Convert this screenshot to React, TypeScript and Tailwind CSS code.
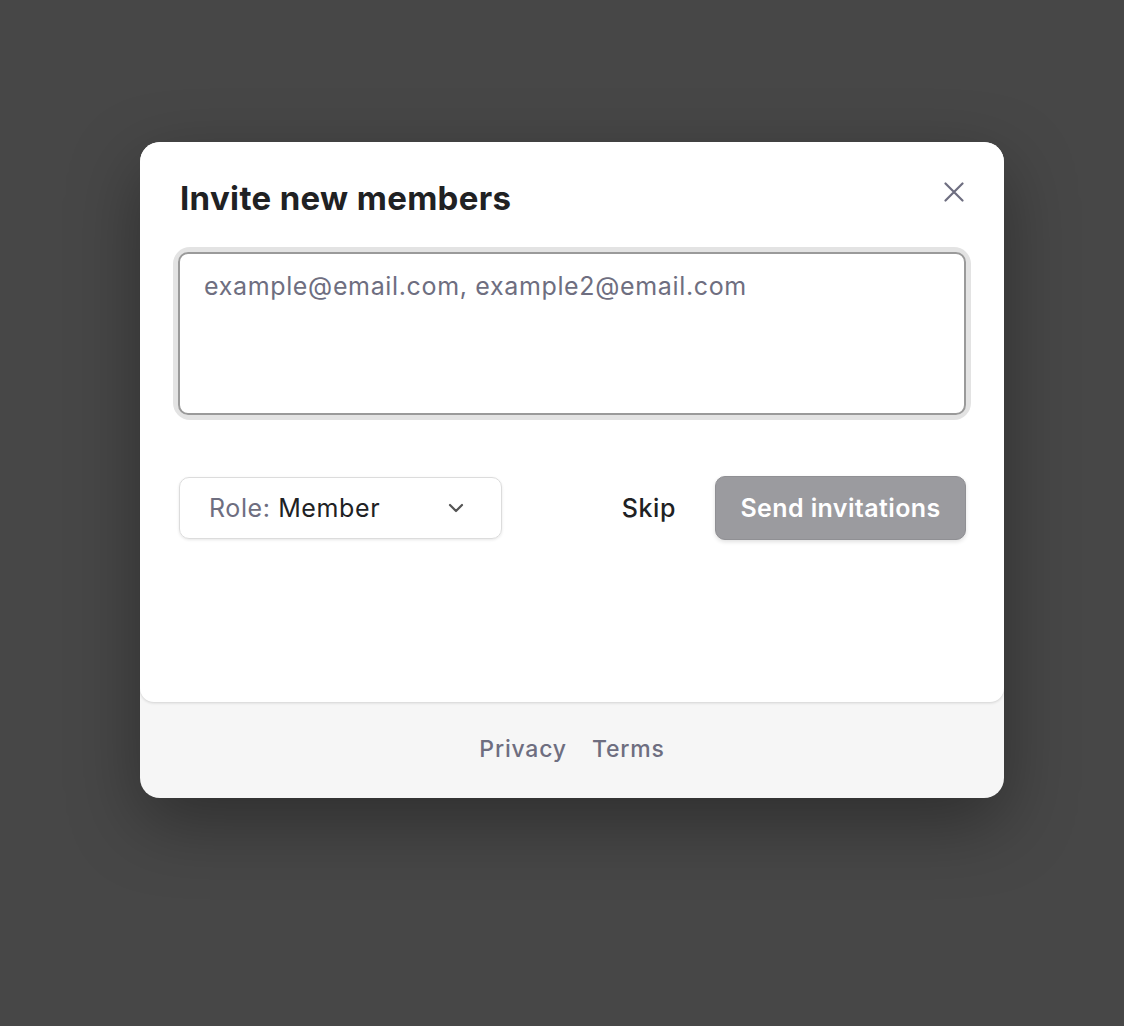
import React from "react";

export default function App() {
  return (
    <div
      className="min-h-[1026px] w-full bg-[#474747] flex justify-start pl-[140px] pt-[142px]"
      style={{ fontFamily: "Inter, 'Noto Sans', sans-serif" }}
    >
      <div className="w-[864px] h-[656px] rounded-[20px] bg-[#f6f6f6] flex flex-col overflow-hidden shadow-[0_24px_70px_rgba(0,0,0,0.35)]">
        <div className="h-[560px] bg-white rounded-b-[14px] shadow-[0_1px_3px_rgba(0,0,0,0.15)] px-[38px] pt-[38px] flex flex-col relative">
          <div className="flex items-start justify-between">
            <h1 className="pl-[2px] text-[33px] leading-[36px] font-bold text-[#202123] tracking-[0.35px]">
              Invite new members
            </h1>
            <button className="absolute right-[40px] top-[40px] w-[20px] h-[20px] flex items-center justify-center text-[#6e6e80]">
              <svg width="20" height="20" viewBox="0 0 20 20" fill="none">
                <path d="M1.5 1.5L18.5 18.5M18.5 1.5L1.5 18.5" stroke="currentColor" strokeWidth="2.2" strokeLinecap="round" />
              </svg>
            </button>
          </div>
          <div className="mt-[36px] rounded-[12px] shadow-[0_0_0_5px_#e3e3e3]">
            <div className="h-[163px] rounded-[10px] border-2 border-[#9a9a9a] px-[24px] pt-[16px] text-[25px] leading-[32px] tracking-[0.65px] text-[#6e6e80]">
              example@email.com, example2@email.com
            </div>
          </div>
          <div className="mt-[61px] flex items-center">
            <div className="w-[323px] h-[62px] rounded-[10px] border border-[#dcdcdc] shadow-[0_1px_3px_rgba(0,0,0,0.1)] flex items-center justify-between pl-[29px] pr-[37px] ml-[1px]">
              <span className="text-[25px] leading-[32px] tracking-[0.6px]">
                <span className="text-[#6e6e80]">Role: </span>
                <span className="text-[#202123]">Member</span>
              </span>
              <svg width="16" height="10" viewBox="0 0 16 10" fill="none" className="text-[#555]">
                <path d="M2 2L8 8L14 2" stroke="currentColor" strokeWidth="2.2" strokeLinecap="round" strokeLinejoin="round" />
              </svg>
            </div>
            <div className="flex-1" />
            <button className="text-[25px] leading-[32px] tracking-[0.6px] font-medium text-[#202123] mr-[39px]">Skip</button>
            <button className="w-[251px] h-[64px] rounded-[10px] bg-[#9b9b9f] border border-[#909094] shadow-[0_2px_4px_rgba(0,0,0,0.12)] text-white text-[25px] leading-[32px] tracking-[0.4px] font-semibold">
              Send invitations
            </button>
          </div>
        </div>
        <div className="flex-1 flex items-center justify-center gap-[25px] pb-[2px]">
          <span className="text-[23px] tracking-[0.8px] font-medium text-[#6e6e80]">Privacy</span>
          <span className="text-[23px] tracking-[0.8px] font-medium text-[#6e6e80]">Terms</span>
        </div>
      </div>
    </div>
  );
}
